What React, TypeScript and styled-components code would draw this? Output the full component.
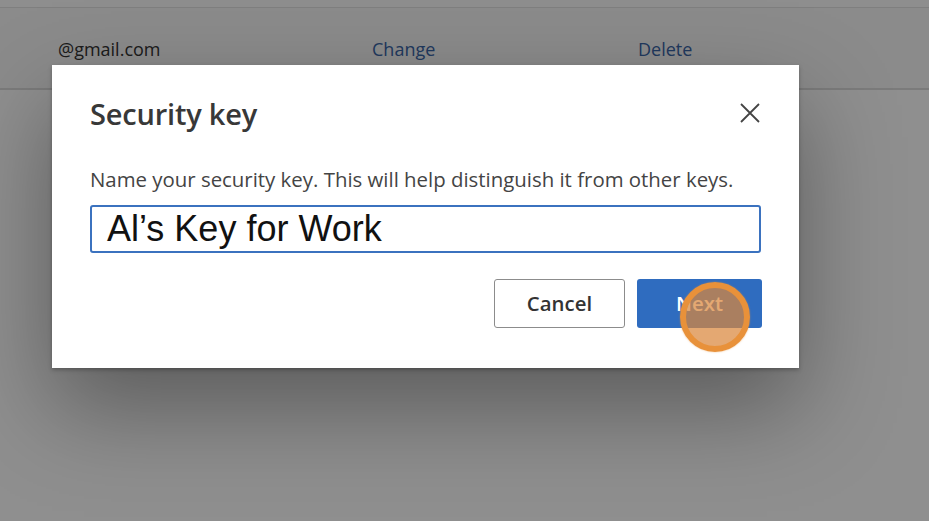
import React from "react";
import styled, { createGlobalStyle } from "styled-components";

const Global = createGlobalStyle`
  html, body { margin: 0; padding: 0; }
  body { width: 929px; height: 521px; overflow: hidden; background: #ffffff; font-family: "Open Sans", "Noto Sans", sans-serif; }
`;

const Page = styled.div`
  position: relative;
  width: 929px;
  height: 521px;
  background: #ffffff;
  overflow: hidden;
`;

const TopStrip = styled.div`
  height: 7px;
  background: #fdfdfd;
  border-bottom: 1px solid #e2e2e2;
`;

const AccountRow = styled.div`
  display: grid;
  grid-template-columns: 314px 266px 1fr;
  align-items: center;
  height: 82px;
  padding: 2px 0 0 58px;
  background: #f8f8f8;
  border-bottom: 2px solid #dcdcdc;
  box-sizing: border-box;
  font-size: 18px;
`;

const Email = styled.span`
  color: #333;
`;

const RowLink = styled.span`
  color: #3a66a8;
`;

const Overlay = styled.div`
  position: absolute;
  inset: 0;
  background: rgba(0, 0, 0, 0.44);
`;

const Dialog = styled.div`
  position: absolute;
  left: 52px;
  top: 65px;
  width: 747px;
  height: 303px;
  background: #ffffff;
  box-sizing: border-box;
  padding: 24px 38px 0 38px;
  box-shadow: 0 40px 90px rgba(0, 0, 0, 0.36), 0 2px 4px rgba(0, 0, 0, 0.25);
  display: flex;
  flex-direction: column;
`;

const Header = styled.div`
  display: flex;
  align-items: center;
  justify-content: space-between;
  height: 48px;
`;

const Title = styled.h1`
  margin: 0;
  font-size: 29px;
  font-weight: 600;
  color: #383838;
  letter-spacing: -0.2px;
`;

const CloseButton = styled.button`
  border: none;
  background: none;
  padding: 0;
  margin-right: -3px;
  width: 28px;
  height: 28px;
  display: flex;
  align-items: center;
  justify-content: center;
  cursor: pointer;
`;

const Description = styled.p`
  margin: 29px 0 0 0;
  font-size: 20.4px;
  color: #444;
  line-height: 26px;
`;

const NameInput = styled.div`
  margin-top: 13px;
  width: 671px;
  height: 48px;
  box-sizing: border-box;
  border: 2px solid #3b72bf;
  border-radius: 3px;
  padding: 0 15px;
  display: flex;
  align-items: center;
  font-family: "Liberation Sans", Arial, sans-serif;
  font-size: 36px;
  color: #111;
`;

const Actions = styled.div`
  margin-top: 26px;
  width: 672px;
  display: flex;
  justify-content: flex-end;
  gap: 12px;
`;

const ActionButton = styled.button<{ $primary?: boolean }>`
  position: relative;
  height: 49px;
  width: ${(p) => (p.$primary ? "125px" : "131px")};
  box-sizing: border-box;
  border-radius: 3px;
  font-family: "Open Sans", "Noto Sans", sans-serif;
  font-size: 20.4px;
  font-weight: 600;
  border: ${(p) => (p.$primary ? "none" : "1.5px solid #8c8c8c")};
  background: ${(p) => (p.$primary ? "#2f6cbf" : "#ffffff")};
  color: ${(p) => (p.$primary ? "#ffffff" : "#333")};
  padding: 0 0 2px 0;
  cursor: pointer;
`;

const ClickMarker = styled.span`
  position: absolute;
  left: 43px;
  top: 3px;
  width: 70px;
  height: 70px;
  box-sizing: border-box;
  border-radius: 50%;
  border: 6px solid #e8913a;
  background: rgba(218, 134, 60, 0.72);
  box-shadow: 0 0 2px rgba(232, 145, 58, 0.6);
`;

export default function App() {
  return (
    <>
      <Global />
      <Page>
        <TopStrip />
        <AccountRow>
          <Email>@gmail.com</Email>
          <RowLink>Change</RowLink>
          <RowLink>Delete</RowLink>
        </AccountRow>
        <Overlay />
        <Dialog role="dialog" aria-label="Security key">
          <Header>
            <Title>Security key</Title>
            <CloseButton aria-label="Close">
              <svg width="22" height="22" viewBox="0 0 22 22">
                <path d="M2 2 L20 20 M20 2 L2 20" stroke="#444" strokeWidth="1.8" fill="none" />
              </svg>
            </CloseButton>
          </Header>
          <Description>
            Name your security key. This will help distinguish it from other keys.
          </Description>
          <NameInput>Al’s Key for Work</NameInput>
          <Actions>
            <ActionButton>Cancel</ActionButton>
            <ActionButton $primary>
              Next
              <ClickMarker />
            </ActionButton>
          </Actions>
        </Dialog>
      </Page>
    </>
  );
}
